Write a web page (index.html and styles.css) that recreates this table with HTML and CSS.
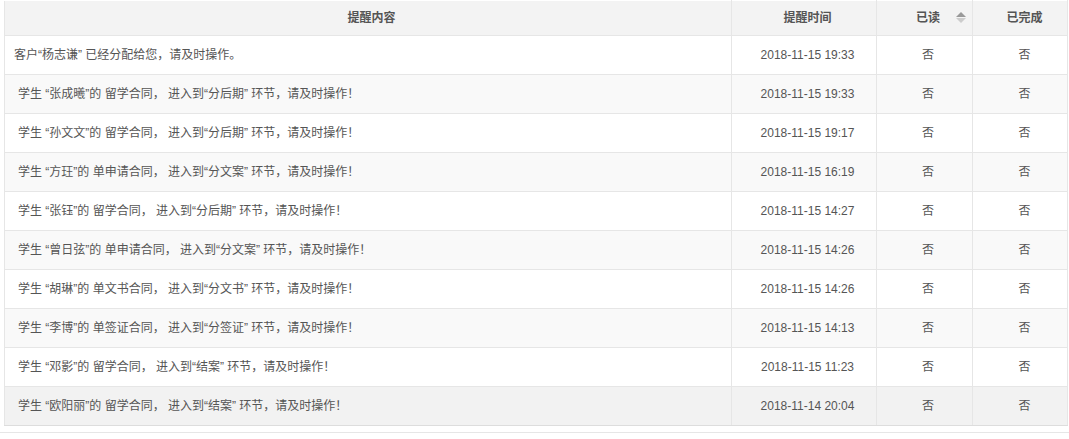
FILE: index.html
```html
<!DOCTYPE html>
<html lang="zh">
<head>
<meta charset="utf-8">
<link rel="stylesheet" href="styles.css">
</head>
<body>
<div class="wrap">
<table class="grid">
<colgroup><col class="c-msg"><col class="c-time"><col class="c-read"><col class="c-done"></colgroup>
<thead>
<tr><th>提醒内容</th><th>提醒时间</th><th class="sortable">已读<span class="sort"><i class="up"></i><i class="down"></i></span></th><th class="last">已完成</th></tr>
</thead>
<tbody>
<tr><td class="msg first">客户“杨志谦” 已经分配给您，请及时操作。</td><td>2018-11-15 19:33</td><td>否</td><td class="last">否</td></tr>
<tr><td class="msg">学生 “张成曦”的 留学合同， 进入到“分后期” 环节，请及时操作！</td><td>2018-11-15 19:33</td><td>否</td><td class="last">否</td></tr>
<tr><td class="msg">学生 “孙文文”的 留学合同， 进入到“分后期” 环节，请及时操作！</td><td>2018-11-15 19:17</td><td>否</td><td class="last">否</td></tr>
<tr><td class="msg">学生 “方玨”的 单申请合同， 进入到“分文案” 环节，请及时操作！</td><td>2018-11-15 16:19</td><td>否</td><td class="last">否</td></tr>
<tr><td class="msg">学生 “张钰”的 留学合同， 进入到“分后期” 环节，请及时操作！</td><td>2018-11-15 14:27</td><td>否</td><td class="last">否</td></tr>
<tr><td class="msg">学生 “曾日弦”的 单申请合同， 进入到“分文案” 环节，请及时操作！</td><td>2018-11-15 14:26</td><td>否</td><td class="last">否</td></tr>
<tr><td class="msg">学生 “胡琳”的 单文书合同， 进入到“分文书” 环节，请及时操作！</td><td>2018-11-15 14:26</td><td>否</td><td class="last">否</td></tr>
<tr><td class="msg">学生 “李博”的 单签证合同， 进入到“分签证” 环节，请及时操作！</td><td>2018-11-15 14:13</td><td>否</td><td class="last">否</td></tr>
<tr><td class="msg">学生 “邓影”的 留学合同， 进入到“结案” 环节，请及时操作！</td><td>2018-11-15 11:23</td><td>否</td><td class="last">否</td></tr>
<tr class="hover"><td class="msg">学生 “欧阳丽”的 留学合同， 进入到“结案” 环节，请及时操作！</td><td>2018-11-14 20:04</td><td>否</td><td class="last">否</td></tr>
</tbody>
</table>
<div class="footer"></div>
</div>
</body>
</html>
```
FILE: styles.css
```css
html, body {
  margin: 0;
  padding: 0;
  background: #fff;
}
body {
  font-family: "Liberation Sans", "Noto Sans CJK SC", sans-serif;
  font-size: 12px;
  line-height: 16px;
  color: #555;
}
.wrap {
  padding-left: 4px;
  width: 1062px;
}
.grid {
  border-collapse: collapse;
  width: 1063px;
  table-layout: fixed;
}
.c-msg { width: 727px; }
.c-time { width: 145px; }
.c-read { width: 96px; }
.c-done { width: 95px; }
.grid th, .grid td {
  border: 1px solid #e6e6e6;
  padding: 0 0 0 7px;
  text-align: center;
  white-space: nowrap;
  overflow: hidden;
}
.grid th.last, .grid td.last {
  padding-left: 9px;
}
.grid thead th {
  height: 34px;
  background: #f3f3f3;
  font-weight: bold;
  color: #555;
  border-top-color: #fff;
}
.grid tbody td {
  height: 38px;
  color: #555;
}
.grid tbody tr:nth-child(even) td {
  background: #f9f9f9;
}
.grid tbody tr.hover td {
  background: #f2f2f2;
  border-bottom-color: #ddd;
}
.grid td.msg {
  text-align: left;
  padding-left: 13px;
}
.grid td.msg.first {
  padding-left: 9px;
}
.grid th.sortable {
  position: relative;
}
.sort {
  position: absolute;
  right: 6px;
  top: 11px;
  width: 10px;
  height: 12px;
}
.sort i {
  position: absolute;
  left: 0;
  width: 0;
  height: 0;
  border-left: 5px solid transparent;
  border-right: 5px solid transparent;
}
.sort .up {
  top: 0;
  border-bottom: 5px solid #999;
}
.sort .down {
  top: 6px;
  border-top: 5px solid #ccc;
}
.footer {
  height: 0;
  margin-top: 6px;
  border-top: 1px solid #e6e6e6;
  margin-left: -4px;
  width: 1069px;
}
```
